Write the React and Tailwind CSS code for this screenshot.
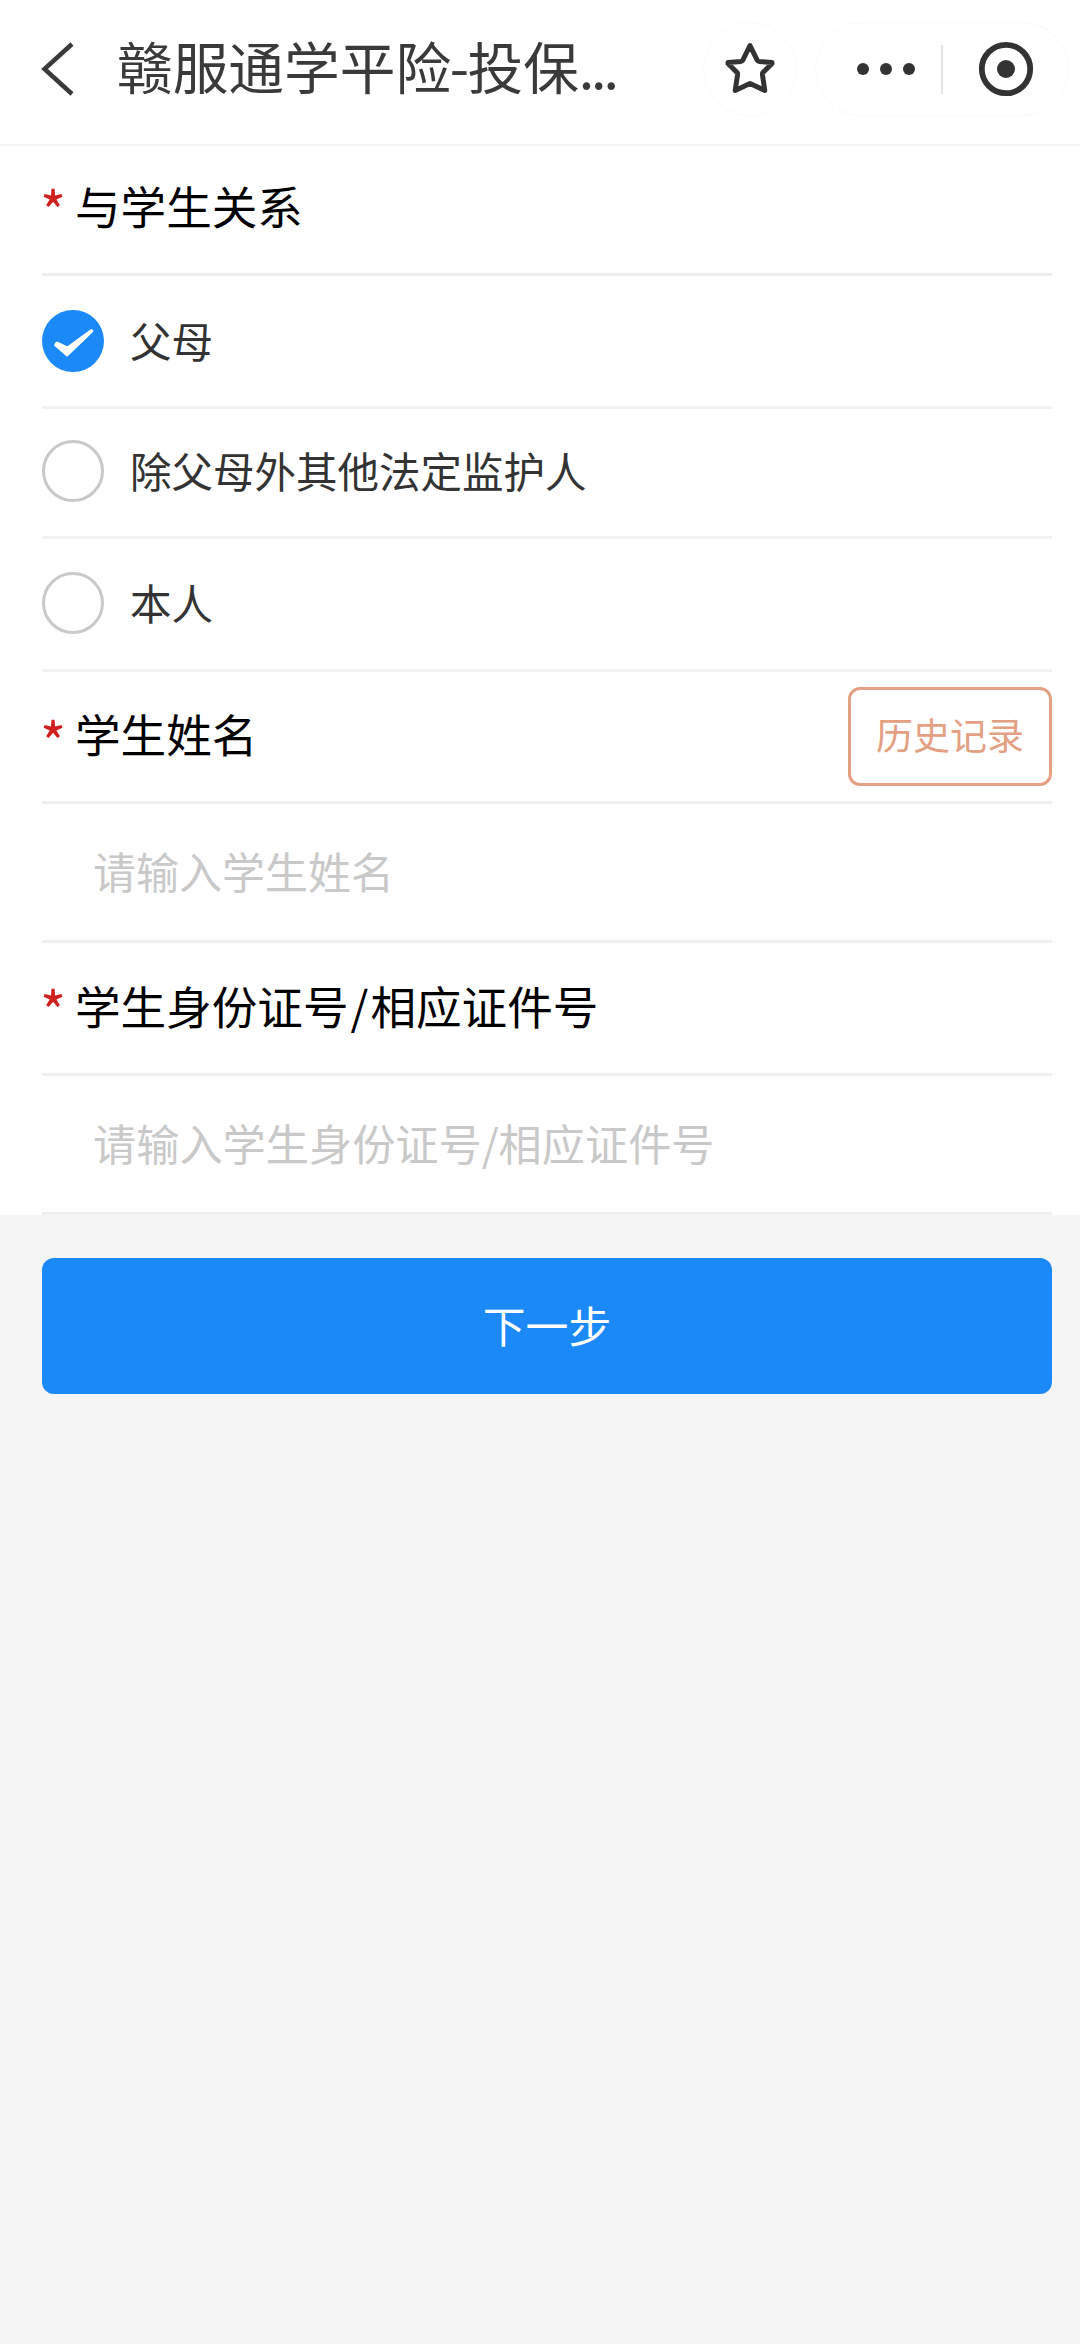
import { useState } from 'react';

const relations = [
  { id: 'parent', text: '父母', height: 'h-[133px]' },
  { id: 'guardian', text: '除父母外其他法定监护人', height: 'h-[130px] pb-1' },
  { id: 'self', text: '本人', height: 'h-[133px] pb-0.5' },
];

const IconBack = () => (
  <svg className="w-9 h-[58px]" viewBox="0 0 36 58" fill="none" stroke="#3a3a3a" strokeWidth="4.5">
    <path d="M32 4 L4.5 29 L32 54" />
  </svg>
);

const IconStar = () => (
  <svg className="w-[56px] h-[56px]" viewBox="0 0 56 56" fill="none" stroke="#333" strokeWidth="5" strokeLinejoin="round">
    <path d="M28 4.5 L35.3 19.3 Q35.8 20.2 37 20.4 L50 21.5 L50 22.5 L41 31.5 Q40.3 32.3 40.4 33.5 L42.8 49.5 L28 42.5 L13.2 49.5 L15.6 33.5 Q15.7 32.3 15 31.5 L6 22.5 L6 21.5 L19 20.4 Q20.2 20.2 20.7 19.3 Z" />
  </svg>
);

const IconClose = () => (
  <svg className="w-[56px] h-[56px]" viewBox="0 0 56 56">
    <circle cx="28" cy="28" r="24.2" fill="none" stroke="#333" strokeWidth="5.8" />
    <circle cx="28" cy="28" r="9" fill="#333" />
  </svg>
);

const Radio = ({ checked }) =>
  checked ? (
    <svg className="w-[62px] h-[62px] shrink-0" viewBox="0 0 62 62">
      <circle cx="31" cy="31" r="31" fill="#1b89f7" />
      <path
        d="M14 35 L25 44.5 L49.5 21 L25.5 38.5 L15 33.5 Z"
        fill="#fff"
        stroke="#fff"
        strokeWidth="3.6"
        strokeLinejoin="round"
      />
    </svg>
  ) : (
    <span className="w-[62px] h-[62px] shrink-0 rounded-full border-3 border-[#c9c9c9]" />
  );

const Label = ({ text, children }) => (
  <div className="flex items-center h-full">
    <span className="-ml-0.5 w-[35px] pt-1.5 text-[56px] leading-[60px] text-[#d0201e]">*</span>
    <span className="grow text-[45.6px] leading-none text-black whitespace-nowrap">{text}</span>
    {children}
  </div>
);

const App = () => {
  const [relation, setRelation] = useState('parent');
  const [name, setName] = useState('');
  const [idNumber, setIdNumber] = useState('');

  return (
    <div className="w-[1080px] h-[2344px] bg-[#f5f5f5] font-['Noto_Sans_CJK_SC',sans-serif]">
      <header className="flex items-center h-[146px] pb-1.5 pl-10 pr-2 bg-white border-b-2 border-[#f5f5f5]">
        <IconBack />
        <h1 className="ml-[41px] w-[586px] pb-2 text-[55.7px] leading-none text-[#3a3a3a] whitespace-nowrap">
          赣服通学平险<span className="-mx-[1.5px]">-</span>投保<span className="tracking-[-3.2px]">...</span>
        </h1>
        <button className="flex items-center justify-center w-[94px] h-[94px] rounded-full border border-[#fafafa]">
          <IconStar />
        </button>
        <div className="ml-[18px] flex items-center w-[254px] h-[94px] rounded-full border border-[#f9f9f9]">
          <div className="ml-[41px] flex gap-[11px]">
            <span className="w-3 h-3 rounded-full bg-[#333]" />
            <span className="w-3 h-3 rounded-full bg-[#333]" />
            <span className="w-3 h-3 rounded-full bg-[#333]" />
          </div>
          <span className="ml-[26px] w-0.5 h-[49px] bg-[#e4e4e4]" />
          <span className="ml-[35px]">
            <IconClose />
          </span>
        </div>
      </header>

      <main className="pl-[42px] pr-7 bg-white">
        <div className="h-[130px] pb-2 border-b-3 border-[#ededed]">
          <Label text="与学生关系" />
        </div>
        {relations.map((item) => (
          <div
            key={item.id}
            className={`${item.height} flex items-center gap-[26px] border-b-3 border-[#f2f2f2]`}
            onClick={() => setRelation(item.id)}
          >
            <Radio checked={relation === item.id} />
            <span className="text-[41.5px] leading-none text-[#333] whitespace-nowrap">{item.text}</span>
          </div>
        ))}
        <div className="h-[132px] border-b-3 border-[#efefef]">
          <Label text={<span className="block pb-1.5">学生姓名</span>}>
            <button className="w-[204px] h-[99px] pb-1 shrink-0 rounded-xl border-3 border-[#e4a083] text-[37px] leading-none text-[#e4a083]">
              历史记录
            </button>
          </Label>
        </div>
        <div className="h-[139px] pb-1 border-b-3 border-[#f1f1f1]">
          <input
            className="w-full h-full pl-[51px] text-[43px] outline-none placeholder:text-[#c9c9c9]"
            placeholder="请输入学生姓名"
            value={name}
            onChange={(e) => setName(e.target.value)}
          />
        </div>
        <div className="h-[133px] pb-1 border-b-3 border-[#f1f1f1]">
          <Label
            text={
              <>
                学生身份证号<span className="mx-[2px]">/</span>相应证件号
              </>
            }
          />
        </div>
        <div className="h-[139px] pb-1 border-b-3 border-[#efefef]">
          <input
            className="w-full h-full pl-[51px] text-[43.2px] outline-none placeholder:text-[#c9c9c9]"
            placeholder="请输入学生身份证号/相应证件号"
            value={idNumber}
            onChange={(e) => setIdNumber(e.target.value)}
          />
        </div>
      </main>

      <div className="pt-[43px] pl-[42px] pr-7">
        <button className="w-full h-[136px] pb-1 rounded-xl bg-[#1b89f7] text-[42.8px] text-white">下一步</button>
      </div>
    </div>
  );
};

export default App;
